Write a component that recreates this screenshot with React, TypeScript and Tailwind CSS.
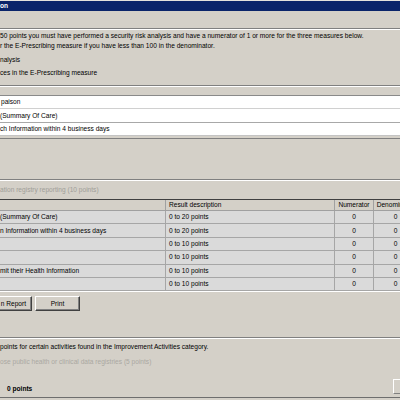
import React from "react";

const rows = [
  { name: "(Summary Of Care)", result: "0 to 20 points" },
  { name: "n Information within 4 business days", result: "0 to 20 points" },
  { name: "", result: "0 to 10 points" },
  { name: "", result: "0 to 10 points" },
  { name: "mit their Health Information", result: "0 to 10 points" },
  { name: "", result: "0 to 10 points" },
];

function Etched() {
  return (
    <div className="flex flex-col">
      <div className="h-px bg-[#808080]" />
      <div className="h-px bg-white" />
    </div>
  );
}

function Btn({ children, className }: { children: React.ReactNode; className?: string }) {
  return (
    <div
      className={`flex h-[15px] items-center border border-t-white border-l-white border-r-[#404040] border-b-[#404040] bg-[#d4d0c8] shadow-[inset_-1px_-1px_0_#808080] ${className ?? ""}`}
    >
      {children}
    </div>
  );
}

export default function App() {
  return (
    <div
      className="h-[400px] w-[400px] overflow-hidden bg-[#d4d0c8] text-[6.6px] leading-[10px] text-black"
      style={{ fontFamily: '"Liberation Sans", Arial, sans-serif' }}
    >
      <div className="h-px bg-[#e4e2dc]" />
      <div className="flex h-[10px] items-center bg-[#0a246a] font-bold text-white">on</div>

      <div className="h-[17px]" />
      <Etched />

      <div className="h-px" />
      <div className="h-[10px] whitespace-nowrap">
        50 points you must have performed a security risk analysis and have a numerator of 1 or more for the three measures below.
      </div>
      <div className="h-[10px]">r the E-Prescribing measure if you have less than 100 in the denominator.</div>
      <div className="h-[4px]" />
      <div className="h-[10px]">nalysis</div>
      <div className="h-[3px]" />
      <div className="h-[10px]">ces in the E-Prescribing measure</div>
      <div className="h-[7px]" />
      <Etched />
      <div className="h-[8px]" />

      {/* list */}
      <div className="border-t border-[#8a8a8a]">
        <div className="flex h-[13px] items-center border-b border-[#d0d0d0] bg-white pl-[1px]">paison</div>
        <div className="flex h-[14px] items-center border-b border-[#a8a8a8] bg-white">(Summary Of Care)</div>
        <div className="flex h-[13px] items-center border-b border-[#c4c4c4] bg-white">
          ch Information within 4 business days
        </div>
        <div className="h-[2px] bg-[#d4d0c8]" />
        <div className="h-px bg-[#808080]" />
      </div>

      <div className="h-[40px]" />
      <Etched />
      <div className="flex h-[18px] items-center text-[#a09e98]">ation registry reporting (10 points)</div>

      {/* table */}
      <div className="w-[417px] border-t border-[#404040]">
        <div className="grid h-[11px] grid-cols-[165px_169px_39px_44px] border-b border-[#a0a0a0] bg-[#d4d0c8]">
          <div />
          <div className="flex items-center border-l border-[#a0a0a0] pl-[3px]">Result description</div>
          <div className="flex items-center justify-center border-l border-[#a0a0a0]">Numerator</div>
          <div className="flex items-center justify-center border-l border-[#a0a0a0] whitespace-nowrap">Denominator</div>
        </div>
        {rows.map((r, i) => (
          <div
            key={i}
            className="grid h-[13.4px] grid-cols-[165px_169px_39px_44px] border-b border-[#a6a6a6] bg-[#dadada]"
          >
            <div className="flex items-center">{r.name}</div>
            <div className="flex items-center border-l border-[#a6a6a6] pl-[3px]">{r.result}</div>
            <div className="flex items-center justify-center border-l border-[#a6a6a6]">0</div>
            <div className="flex items-center justify-center border-l border-[#a6a6a6]">0</div>
          </div>
        ))}
        <div className="h-px bg-white" />
      </div>

      <div className="h-[4px]" />
      <div className="flex gap-[3px]">
        <Btn className="w-[32px] justify-end border-l-0 pr-[5px]">n Report</Btn>
        <Btn className="w-[45px] justify-center">Print</Btn>
      </div>

      <div className="h-[26px]" />
      <Etched />
      <div className="h-[3px]" />
      <div className="h-[10px]">points for certain activities found in the Improvement Activities category.</div>
      <div className="h-[5px]" />
      <div className="h-[10px] text-[#aaa8a2]">ose public health or clinical data registries (5 points)</div>

      <div className="flex h-[30px] items-start justify-between">
        <div className="mt-[17px] pl-[7px] font-bold">0 points</div>
        <div className="mt-[12px] h-[15px] w-[7px] border-t border-l border-white border-b border-b-[#808080]" />
      </div>
      <div className="h-px bg-[#6e6e6e]" />
    </div>
  );
}
